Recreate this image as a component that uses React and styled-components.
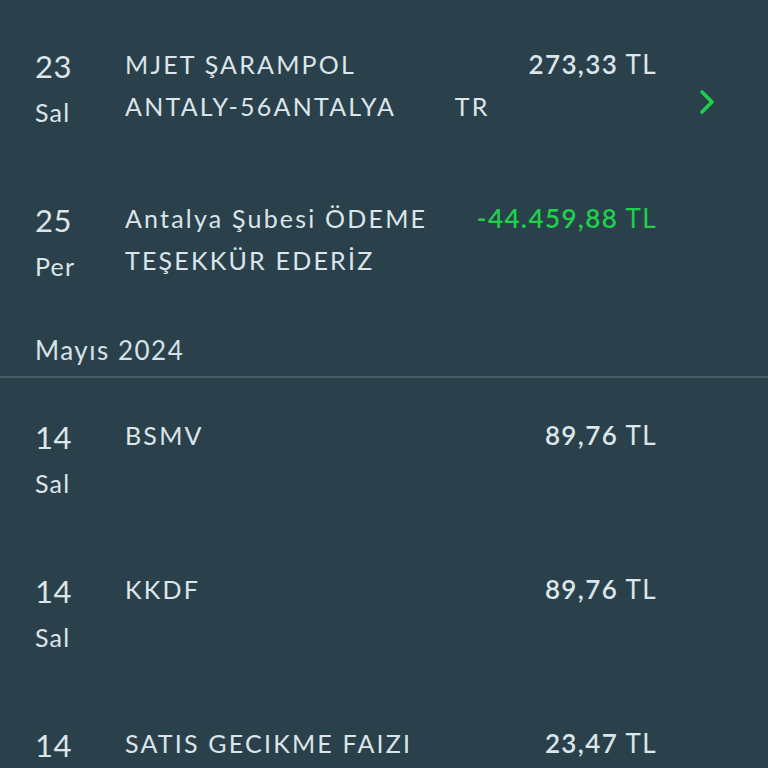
import styled, { createGlobalStyle } from "styled-components";

const GlobalStyle = createGlobalStyle`
    html, body {
        margin: 0;
        padding: 0;
        background: #2a414b;
    }
    body {
        font-family: Lato, "Noto Sans", sans-serif;
        color: #dce5e9;
    }
`

const groups = [
    {
        month: null,
        rows: [
            { day: "23", weekday: "Sal", lines: ["MJET ŞARAMPOL", "ANTALY-56ANTALYA       TR"], amount: "273,33", chevron: true },
            { day: "25", weekday: "Per", lines: ["Antalya Şubesi ÖDEME", "TEŞEKKÜR EDERİZ"], amount: "-44.459,88", credit: true },
        ],
    },
    {
        month: "Mayıs 2024",
        rows: [
            { day: "14", weekday: "Sal", lines: ["BSMV"], amount: "89,76" },
            { day: "14", weekday: "Sal", lines: ["KKDF"], amount: "89,76" },
            { day: "14", weekday: "Sal", lines: ["SATIS GECIKME FAIZI"], amount: "23,47" },
        ],
    },
];

export default function App() {
    return (
        <Screen>
            <GlobalStyle />
            {groups.map((group, i) => (
                <div key={i}>
                    {group.month && <MonthHeader>{group.month}</MonthHeader>}
                    <Section $first={i === 0}>
                        {group.rows.map((row, j) => (
                            <Row key={j}>
                                <DateCol>
                                    <DayNum>{row.day}</DayNum>
                                    <WeekDay>{row.weekday}</WeekDay>
                                </DateCol>
                                <Desc>
                                    {row.lines.map((l, k) => <div key={k}>{l}</div>)}
                                </Desc>
                                <Amount $credit={row.credit}>
                                    <strong>{row.amount}</strong> TL
                                </Amount>
                                <ChevronCell>
                                    {row.chevron && (
                                        <svg width="20" height="26" viewBox="0 0 20 26">
                                            <polyline points="5,3 15,13 5,23" fill="none" stroke="#1fd04a" strokeWidth="3.6" strokeLinecap="round" strokeLinejoin="round" />
                                        </svg>
                                    )}
                                </ChevronCell>
                            </Row>
                        ))}
                    </Section>
                </div>
            ))}
        </Screen>
    );
}

const Screen = styled.div`
    width: 768px;
    height: 768px;
    overflow: hidden;
    background: #2a414b;
    padding-top: 43px;
    box-sizing: border-box;
`

const Section = styled.div`
    display: flex;
    flex-direction: column;
    gap: 62px;
    padding-top: ${p => p.$first ? "0" : "36px"};
    padding-bottom: ${p => p.$first ? "43px" : "0"};
`

const MonthHeader = styled.div`
    padding: 0 35px 8px;
    font-size: 26px;
    line-height: 36px;
    letter-spacing: 1.5px;
    color: #d6e2e8;
    border-bottom: 2px solid #4a5e67;
`

const Row = styled.div`
    display: grid;
    grid-template-columns: 90px 1fr auto 112px;
    padding-left: 35px;
    align-items: start;
`

const DateCol = styled.div`
    display: flex;
    flex-direction: column;
    line-height: 46px;
`

const DayNum = styled.span`
    font-size: 31px;
    letter-spacing: 0.5px;
`

const WeekDay = styled.span`
    font-size: 25px;
    letter-spacing: 1.2px;
`

const Desc = styled.div`
    font-size: 25px;
    line-height: 42px;
    letter-spacing: 2.2px;
    white-space: pre;
`

const Amount = styled.div`
    font-size: 26px;
    line-height: 42px;
    letter-spacing: 1.4px;
    text-align: right;
    margin-right: -1px;
    color: ${p => p.$credit ? "#1fd04a" : "#dce5e9"};

    strong {
        font-weight: 600;
    }
`

const ChevronCell = styled.div`
    display: flex;
    justify-content: center;
    padding-top: 46px;
    padding-right: 10px;
`
